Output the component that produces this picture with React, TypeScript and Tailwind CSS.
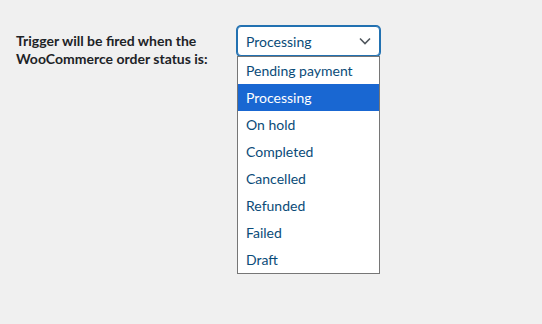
import React from 'react';

const statuses = ['Pending payment', 'Processing', 'On hold', 'Completed', 'Cancelled', 'Refunded', 'Failed', 'Draft'];

export default function App() {
  const selected = 'Processing';

  return (
    <div className="w-[542px] h-[324px] bg-[#f0f0f0] font-['Segoe_UI','Lato',sans-serif] text-[14px] overflow-hidden">
      <div className="flex pt-[26px] pl-4">
        <div className="w-[221px] pt-[6px] font-bold leading-[18px] text-[#1d2327]">
          Trigger will be fired when the WooCommerce order status is:
        </div>
        <div className="w-[143px]">
          <div className="h-[30px] flex items-center justify-between pl-[8px] pr-[8px] bg-white border border-[#2271b1] rounded-[4px] shadow-[0_0_0_1px_#2271b1] text-[#0a4b78]">
            <span>{selected}</span>
            <svg width="12" height="8" viewBox="0 0 12 8" fill="none">
              <path d="M1 1.5 L6 6.5 L11 1.5" stroke="#50575e" strokeWidth="1.6" />
            </svg>
          </div>
          <div className="bg-white border border-[#767676]">
            {statuses.map(s => (
              <div
                key={s}
                className={`h-[27px] flex items-center pl-[8px] ${
                  s === selected ? 'bg-[#1967d2] text-white' : 'text-[#0a4b78]'
                }`}
              >
                {s}
              </div>
            ))}
          </div>
        </div>
      </div>
    </div>
  );
}
